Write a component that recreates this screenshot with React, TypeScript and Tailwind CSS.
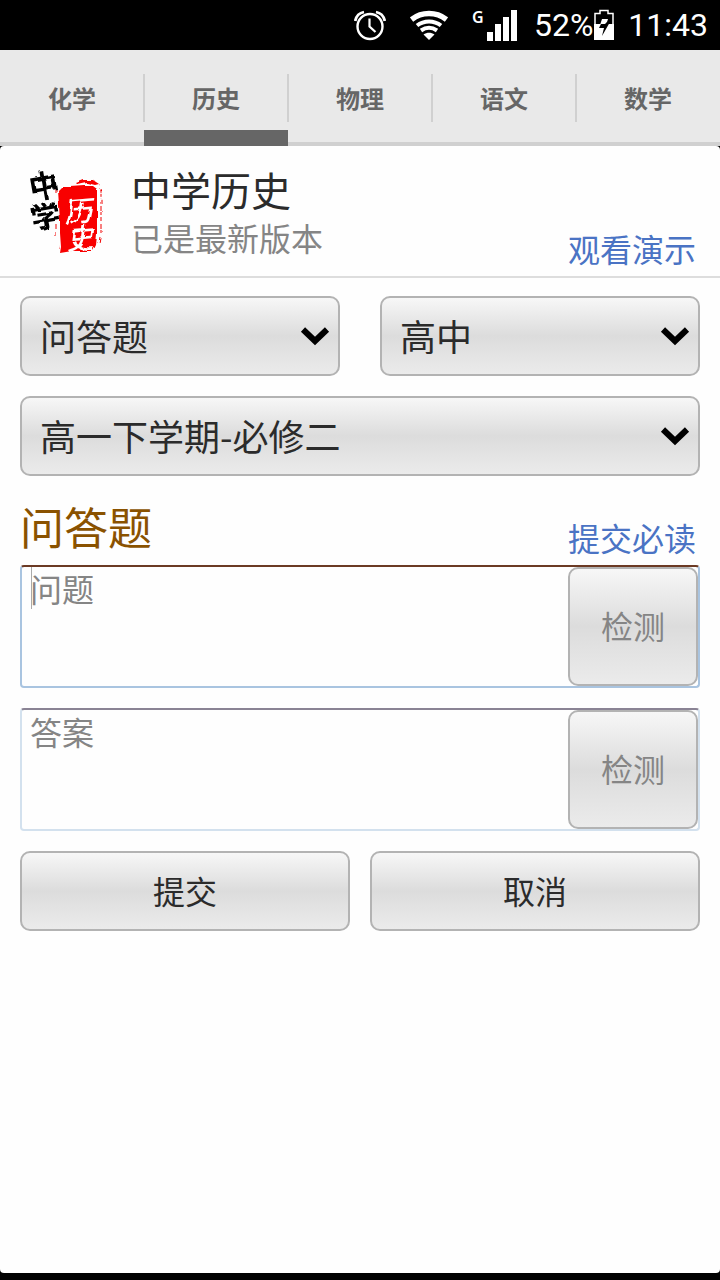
import type { ReactNode } from "react";
import { clsx } from "clsx";

const subjects = ["化学", "历史", "物理", "语文", "数学"];

const glossy =
  "rounded-[10px] border-2 border-[#b3b3b3] bg-linear-to-b from-[#f7f7f7] via-[#dcdcdc] to-[#ebebeb]";

const StatusBar = () => {
  return (
    <div className="flex h-[50px] items-center justify-end bg-black pr-3 font-['Roboto',sans-serif] text-[32px] leading-[50px] text-white">
      <svg className="mr-6 h-8 w-8" viewBox="0 0 32 32" fill="none" stroke="white" aria-label="Alarm">
        <circle cx="16" cy="17.500" r="12.500" strokeWidth="2.400" />
        <path d="M15.500 9.500v8l6 5.500" strokeWidth="2.200" />
        <path d="M1.200 12C2 8 5 4 10 3M30.800 12C30 8 27 4 22 3" strokeWidth="2.800" />
      </svg>
      <svg className="mr-6 h-8 w-[38px]" viewBox="0 0 38 32" fill="none" stroke="white" aria-label="Wi-Fi">
        <path d="M1.500 10.500C12 2.500 26 2.500 36.500 10.500" strokeWidth="5.500" />
        <path d="M7 16.500C14 11 24 11 31 16.500" strokeWidth="4" />
        <path d="M11 21.500C16 18 22 18 27 21.500" strokeWidth="4" />
        <path d="M13.500 25.500C17 23 21 23 24.500 25.500L19 31Z" fill="white" stroke="none" />
      </svg>
      <svg className="mr-4 h-11 w-[46px]" viewBox="0 -6 46 44" fill="white" aria-label="Signal">
        <text x="0" y="14" fontSize="16" fontWeight="600" fontFamily="Noto Sans">
          G
        </text>
        <path d="M15 23h6v9h-6zM23 15h6v17h-6zM31 8h6v24h-6zM39 1h6v31h-6z" />
      </svg>
      <span>52%</span>
      <svg className="mr-[13px] h-8 w-[22px]" viewBox="0 0 22 32" aria-label="Charging">
        <path d="M2 4.500h5v-3h8v3h5V30H2z" fill="black" stroke="white" strokeWidth="1.500" />
        <path d="M1 15h20v16H1z" fill="white" />
        <path d="M9 10h6l-2 6h-6z" fill="white" />
        <path d="M8 15h4l2-2h3l-8 14 2-8H6z" fill="black" />
      </svg>
      <span>11:43</span>
    </div>
  );
};

const Tabs = () => {
  return (
    <nav className="flex h-24 border-b-4 border-[#d0d0d0] bg-[#e9e9e9]">
      {subjects.map((subject, i) => (
        <a
          key={subject}
          href="#"
          className="relative flex flex-1 items-center justify-center pt-1 text-2xl font-bold text-[#666666]"
        >
          {subject}
          {i < subjects.length - 1 && (
            <span className="absolute top-6 right-0 h-12 w-0.5 translate-x-px bg-[#d0d0d0]" />
          )}
          {subject === "历史" && <span className="absolute inset-x-0 -bottom-1 h-4 bg-[#666666]" />}
        </a>
      ))}
    </nav>
  );
};

const Logo = () => {
  return (
    <svg
      className="h-[100px] w-20 shrink-0"
      viewBox="0 0 80 100"
      fontFamily="'Noto Sans CJK SC', sans-serif"
      fontWeight="bold"
      aria-label="中学历史"
    >
      <filter id="brush" x="-10%" y="-10%" width="120%" height="120%">
        <feTurbulence type="fractalNoise" baseFrequency="0.08" numOctaves="2" seed="4" result="noise" />
        <feDisplacementMap in="SourceGraphic" in2="noise" scale="5" />
      </filter>
      <g filter="url(#brush)">
        <path
          d="M34 32l3-3 10 0 14-1 8 0 4 3v18l0 14 0 14-1 10-3 6-10 0-11 0-12 2 1-6-1-14 0-13-1-14z"
          fill="#f80000"
        />
        <path d="M52 25l8-3 9 0 6 4-4 1-8-2-9 2z" fill="#f80000" />
        <path
          d="M76 30l1 3v13M77 48v15M77 66v10M76 79l-1 6M32 30v6M32 66v5M32 74v6"
          fill="none"
          stroke="#f00000"
          strokeWidth="1"
          strokeDasharray="5 1 3 2"
        />
        <text transform="translate(7 41) rotate(-10)" fontSize="30">中</text>
        <text transform="translate(9 72) rotate(-10)" fontSize="30">学</text>
        <text transform="translate(41 65) rotate(-5) skewX(-12)" fontSize="28" fontWeight="500" fill="white">历</text>
        <text transform="translate(43 92) rotate(-5) skewX(-12)" fontSize="28" fontWeight="500" fill="white">史</text>
      </g>
    </svg>
  );
};

const Picker = ({ label, children }: { label: string; children: ReactNode }) => {
  return (
    <div className="relative flex-1">
      <select
        aria-label={label}
        className={clsx(glossy, "h-20 w-full appearance-none pr-14 pb-[3px] pl-[18px] text-4xl text-[#2b2b2b] outline-none")}
      >
        {children}
      </select>
      <svg
        className="pointer-events-none absolute top-[30px] right-[10px] h-5 w-[30px]"
        viewBox="0 0 30 20"
        fill="none"
        stroke="black"
        strokeWidth="6"
      >
        <path d="M3 3.500l12 11.500L27 3.500" />
      </svg>
    </div>
  );
};

type AnswerBoxProps = {
  placeholder: string;
  focused?: boolean;
};

const AnswerBox = ({ placeholder, focused }: AnswerBoxProps) => {
  return (
    <div
      className={clsx(
        "relative flex rounded-[4px] border-2",
        focused ? "border-[#a9c4e0] border-t-[#6b3a24]" : "border-[#d3e1ee] border-t-[#8a8394]",
      )}
    >
      <textarea
        aria-label={placeholder}
        placeholder={placeholder}
        className="h-[119px] min-w-0 flex-1 resize-none px-2 text-[32px] leading-[42px] text-[#2b2b2b] outline-none placeholder:text-[#858585]"
      />
      {focused && <span className="absolute top-0 left-[9px] h-[42px] w-px bg-[#aaaaaa]" />}
      <button type="button" disabled className={clsx(glossy, "w-[130px] pb-[3px] text-[32px] text-[#858585]")}>
        检测
      </button>
    </div>
  );
};

export default function App() {
  return (
    <div className="flex min-h-screen flex-col bg-black pb-[7px] font-['Noto_Sans_CJK_SC',sans-serif]">
      <StatusBar />
      <Tabs />
      <main className="flex-1 rounded-[4px] bg-[#fefefe]">
        <header className="flex h-[132px] items-start border-b-2 border-[#dddddd] px-6">
          <div className="pt-3">
            <Logo />
          </div>
          <div className="flex-1 pt-[18px] pl-[27px]">
            <h1 className="text-[40px] leading-[50px] text-[#2b2b2b]">中学历史</h1>
            <p className="text-[32px] leading-[46px] text-[#858585]">已是最新版本</p>
          </div>
          <a href="#" className="self-end pb-[5px] text-[32px] leading-[46px] text-[#4a73c4]">
            观看演示
          </a>
        </header>
        <form className="flex flex-col gap-5 px-5 pt-[18px]">
          <div className="flex gap-10">
            <Picker label="题型">
              <option>问答题</option>
            </Picker>
            <Picker label="年级">
              <option>高中</option>
            </Picker>
          </div>
          <div className="flex">
            <Picker label="教材">
              <option>高一下学期-必修二</option>
            </Picker>
          </div>
          <div>
            <div className="flex h-[69px] items-end justify-between pr-1">
              <h2 className="text-[44px] leading-[78px] text-[#8a5200]">问答题</h2>
              <a href="#" className="pb-[5px] text-[32px] leading-[46px] text-[#4a73c4]">
                提交必读
              </a>
            </div>
            <AnswerBox placeholder="问题" focused />
          </div>
          <AnswerBox placeholder="答案" />
          <div className="flex gap-5">
            <button type="submit" className={clsx(glossy, "h-20 flex-1 pb-[3px] text-[32px] text-[#2b2b2b]")}>
              提交
            </button>
            <button type="button" className={clsx(glossy, "h-20 flex-1 pb-[3px] text-[32px] text-[#2b2b2b]")}>
              取消
            </button>
          </div>
        </form>
      </main>
    </div>
  );
}
